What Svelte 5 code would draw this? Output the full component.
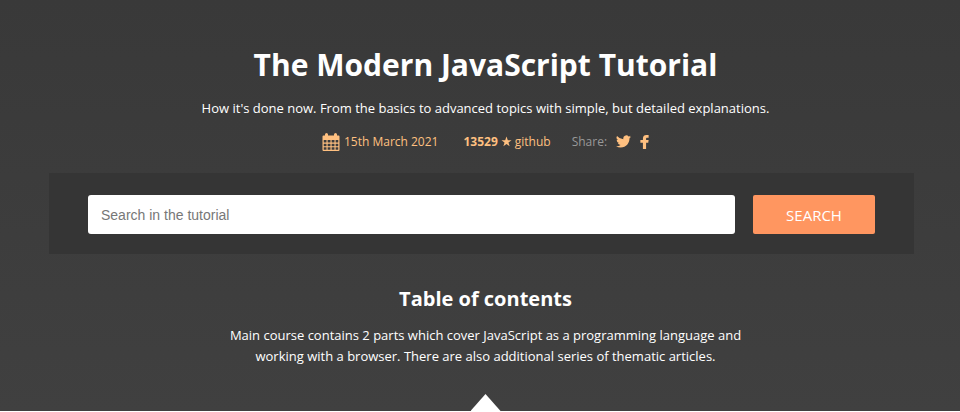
<script lang="ts">
	let query = $state('');

	const stars = 13529;
	const updated = '15th March 2021';
</script>

<main class="page">
	<header class="intro">
		<h1>The Modern JavaScript Tutorial</h1>
		<p class="lead">
			How it's done now. From the basics to advanced topics with simple, but detailed explanations.
		</p>
		<div class="meta">
			<a class="date" href="#updated">
				<svg class="calendar" viewBox="0 0 18 18" aria-hidden="true">
					<path
						fill="currentColor"
						fill-rule="evenodd"
						d="M3 2.500V1.500a1.500 1.500 0 0 1 3 0v1h6v-1a1.500 1.500 0 0 1 3 0v1h1.500q1 0 1 1V17q0 1-1 1h-15q-1 0-1-1V3.500q0-1 1-1zM1.700 7v2.600h2.800V7zm3.900 0v2.600h2.900V7zm4 0v2.600h2.900V7zm4 0v2.600h2.700V7zM1.700 10.700v2.500h2.800v-2.500zm3.900 0v2.500h2.900v-2.500zm4 0v2.500h2.900v-2.500zm4 0v2.500h2.700v-2.500zM1.700 14.300v2.500h2.800v-2.500zm3.900 0v2.500h2.900v-2.500zm4 0v2.500h2.900v-2.500zm4 0v2.500h2.700v-2.500z"
					/>
				</svg>
				{updated}
			</a>
			<a class="github" href="#github">
				<strong>{stars}</strong>
				<svg class="star" viewBox="0 0 24 24" aria-hidden="true">
					<path fill="currentColor" d="M12 1l2.800 8H23l-6.700 5 2.500 8.500L12 17.400 5.200 22.500 7.700 14 1 9h8.200z" />
				</svg>
				github
			</a>
			<div class="share">
				<span>Share:</span>
				<a href="#twitter" aria-label="Share on Twitter">
					<svg class="twitter" viewBox="0 0 24 20" aria-hidden="true">
						<path
							fill="currentColor"
							d="M23.950 2.570a10 10 0 0 1-2.820.770 4.960 4.960 0 0 0 2.160-2.720 9.900 9.900 0 0 1-3.120 1.190 4.920 4.920 0 0 0-8.380 4.480A13.930 13.930 0 0 1 1.640 1.160a4.920 4.920 0 0 0 1.520 6.570 4.900 4.900 0 0 1-2.230-.610v.060a4.920 4.920 0 0 0 3.950 4.830 5 5 0 0 1-2.210.080 4.940 4.940 0 0 0 4.600 3.420A9.870 9.870 0 0 1 0 17.540a13.990 13.990 0 0 0 7.550 2.210c9.050 0 14-7.500 14-13.980 0-.210 0-.420-.020-.630a9.940 9.940 0 0 0 2.420-2.570z"
						/>
					</svg>
				</a>
				<a href="#facebook" aria-label="Share on Facebook">
					<svg class="facebook" viewBox="0 0 10 16" aria-hidden="true">
						<path
							fill="currentColor"
							d="M9.700.100v3H8.200c-1.100 0-1.400.500-1.400 1.200v1.300h2.900L9.300 8.800H6.800V16H3.200V8.800H.300V5.600h2.900V3.900C3.200 1.300 4.800 0 7.200 0c1.100 0 2.100.100 2.500.100z"
						/>
					</svg>
				</a>
			</div>
		</div>
	</header>

	<form class="search" onsubmit={(event) => event.preventDefault()}>
		<input
			type="text"
			placeholder="Search in the tutorial"
			aria-label="Search in the tutorial"
			bind:value={query}
		/>
		<button type="submit">SEARCH</button>
	</form>

	<section class="contents">
		<h2>Table of contents</h2>
		<p>
			Main course contains 2 parts which cover JavaScript as a programming language and working with
			a browser. There are also additional series of thematic articles.
		</p>
		<div class="pointer"></div>
	</section>
</main>

<style>
	:global(body) {
		margin: 0;
		background: #fff;
	}

	.page {
		padding: 44px 46px 0 49px;
		background: linear-gradient(#393939, #404040);
		color: #fff;
		font-family: 'Open Sans', 'Noto Sans', sans-serif;
		font-size: 13px;
		line-height: 21px;
	}

	h1,
	h2,
	p {
		margin: 0;
	}

	.intro,
	.contents {
		display: flex;
		flex-direction: column;
		align-items: center;
		padding-left: 8px;
		text-align: center;
	}

	h1 {
		font-size: 30px;
		line-height: 42px;
	}

	.lead {
		margin-top: 12px;
	}

	.meta {
		display: flex;
		align-items: center;
		margin-top: 12px;
		font-size: 12px;
	}

	.meta a {
		color: #ffc080;
		text-decoration: none;
	}

	.date,
	.github,
	.share {
		display: flex;
		align-items: center;
	}

	.date {
		gap: 4px;
		margin-right: 25px;
	}

	.github {
		gap: 3px;
		margin-right: 21px;
	}

	.share {
		gap: 9px;
		color: #999;
	}

	svg {
		display: block;
	}

	.calendar {
		width: 18px;
		height: 18px;
	}

	.star {
		width: 11px;
		height: 11px;
	}

	.twitter {
		width: 15px;
		height: 13px;
	}

	.facebook {
		width: 9px;
		height: 14px;
	}

	.search {
		display: flex;
		gap: 18px;
		margin-top: 21px;
		padding: 22px 39px 20px;
		background: #353535;
	}

	.search input {
		flex: 1;
		min-width: 0;
		height: 39px;
		box-sizing: border-box;
		padding: 0 13px;
		border: 0;
		border-radius: 3px;
		background: #fff;
		color: #333;
		font-family: 'Liberation Sans', sans-serif;
		font-size: 14px;
	}

	.search input::placeholder {
		color: #777;
	}

	.search button {
		width: 122px;
		height: 39px;
		padding: 0;
		border: 0;
		border-radius: 2px;
		background: #ff9660;
		color: #fff;
		font-family: inherit;
		font-size: 15px;
		cursor: pointer;
	}

	.contents {
		margin-top: 31px;
	}

	h2 {
		font-size: 20px;
		line-height: 28px;
	}

	.contents p {
		max-width: 540px;
		margin-top: 12px;
	}

	.pointer {
		width: 30px;
		height: 17px;
		margin-top: 27px;
		background: #fff;
		clip-path: polygon(50% 0, 100% 100%, 0 100%);
	}
</style>
